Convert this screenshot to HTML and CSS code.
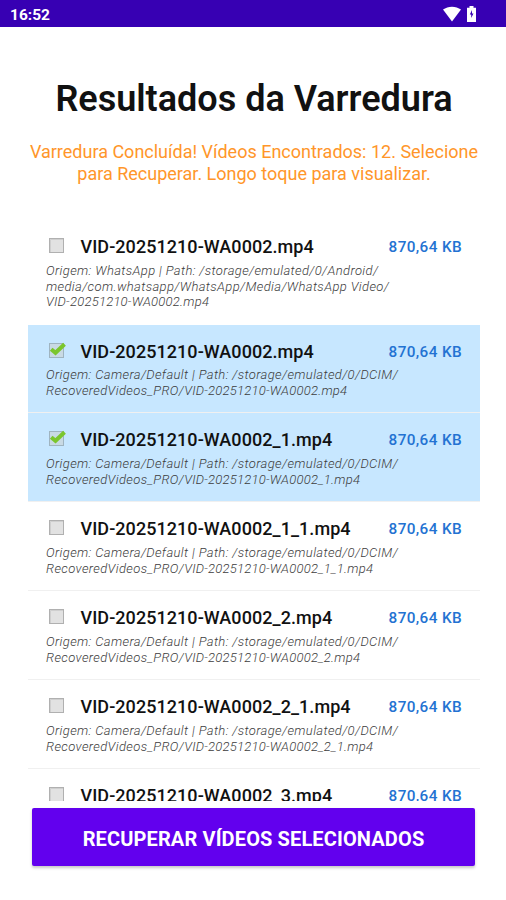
FILE: index.html
```html
<!DOCTYPE html>
<html lang="pt-BR">
<head>
<meta charset="utf-8">
<title>Resultados da Varredura</title>
<link rel="stylesheet" href="styles.css">
</head>
<body>
<svg class="defs" width="0" height="0" aria-hidden="true">
  <symbol id="box" viewBox="0 0 18 18">
    <rect x="1.5" y="1.5" width="14" height="14" fill="#e2e2e2" stroke="#b0b0b0"/>
    <path d="M2.5 15V2.5H15" fill="none" stroke="#cfcfcf"/>
  </symbol>
  <symbol id="checked" viewBox="0 0 18 18">
    <rect x="1.5" y="1.5" width="14" height="14" fill="#c9dae4" stroke="#9fb4c0"/>
    <path d="M3.2 7.2l4.3 3.6 9-8.6" fill="none" stroke="#7bc62d" stroke-width="4"/>
  </symbol>
</svg>
<header class="status">
  <span class="clock">16:52</span>
  <span class="status-icons">
    <svg width="18" height="16" viewBox="0 0 18 16"><path d="M0 3.6C5-.3 13-.3 18 3.6L9 15.5z" fill="#fff"/></svg>
    <svg width="9" height="16" viewBox="0 0 9 16"><path d="M2.5 0h4v1.7H9V16H0V1.7h2.5z" fill="#fff"/><path d="M5 4L2.8 8.5h1.4V12l2.3-4.5H5z" fill="#3700b3"/></svg>
  </span>
</header>
<main class="screen">
  <h1 class="title">Resultados da Varredura</h1>
  <p class="message">Varredura Concluída! Vídeos Encontrados: 12. Selecione<br>para Recuperar. Longo toque para visualizar.</p>
  <ul class="list">
    <li class="item">
      <div class="row"><svg class="check"><use href="#box"/></svg><span class="name">VID-20251210-WA0002.mp4</span><span class="size">870,64 KB</span></div>
      <p class="path">Origem: WhatsApp | Path: /storage/emulated/0/Android/<br>media/com.whatsapp/WhatsApp/Media/WhatsApp Video/<br><span class="file">VID-20251210-WA0002.mp4</span></p>
    </li>
    <li class="item selected">
      <div class="row"><svg class="check"><use href="#checked"/></svg><span class="name">VID-20251210-WA0002.mp4</span><span class="size">870,64 KB</span></div>
      <p class="path">Origem: Camera/Default | Path: /storage/emulated/0/DCIM/<br>RecoveredVideos_PRO/<span class="file">VID-20251210-WA0002.mp4</span></p>
    </li>
    <li class="item selected">
      <div class="row"><svg class="check"><use href="#checked"/></svg><span class="name">VID-20251210-WA0002_1.mp4</span><span class="size">870,64 KB</span></div>
      <p class="path">Origem: Camera/Default | Path: /storage/emulated/0/DCIM/<br>RecoveredVideos_PRO/<span class="file">VID-20251210-WA0002_1.mp4</span></p>
    </li>
    <li class="item">
      <div class="row"><svg class="check"><use href="#box"/></svg><span class="name">VID-20251210-WA0002_1_1.mp4</span><span class="size">870,64 KB</span></div>
      <p class="path">Origem: Camera/Default | Path: /storage/emulated/0/DCIM/<br>RecoveredVideos_PRO/<span class="file">VID-20251210-WA0002_1_1.mp4</span></p>
    </li>
    <li class="item">
      <div class="row"><svg class="check"><use href="#box"/></svg><span class="name">VID-20251210-WA0002_2.mp4</span><span class="size">870,64 KB</span></div>
      <p class="path">Origem: Camera/Default | Path: /storage/emulated/0/DCIM/<br>RecoveredVideos_PRO/<span class="file">VID-20251210-WA0002_2.mp4</span></p>
    </li>
    <li class="item">
      <div class="row"><svg class="check"><use href="#box"/></svg><span class="name">VID-20251210-WA0002_2_1.mp4</span><span class="size">870,64 KB</span></div>
      <p class="path">Origem: Camera/Default | Path: /storage/emulated/0/DCIM/<br>RecoveredVideos_PRO/<span class="file">VID-20251210-WA0002_2_1.mp4</span></p>
    </li>
    <li class="item">
      <div class="row"><svg class="check"><use href="#box"/></svg><span class="name">VID-20251210-WA0002_3.mp4</span><span class="size">870,64 KB</span></div>
    </li>
  </ul>
  <button class="recover">RECUPERAR VÍDEOS SELECIONADOS</button>
</main>
</body>
</html>
```

FILE: styles.css
```css
* { box-sizing: border-box; margin: 0; padding: 0; }
body { width: 506px; height: 900px; overflow: hidden; background: #fff; font-family: Roboto, "Liberation Sans", sans-serif; }
.defs { display: block; }
.status { height: 27px; padding: 0 30px 0 10px; background: #3700b3; display: flex; align-items: center; justify-content: space-between; color: #fff; }
.clock { font-size: 15.5px; font-weight: 700; line-height: 20px; padding-top: 3px; }
.status-icons { display: flex; gap: 6px; }
.screen { height: 873px; padding: 0 26px 0 28px; display: flex; flex-direction: column; }
.title { margin-top: 51px; font-size: 36px; font-weight: 600; line-height: 42px; color: #111; text-align: center; white-space: nowrap; }
.message { margin-top: 21px; font-size: 18px; line-height: 21.5px; color: #ff962a; text-align: center; white-space: nowrap; }
.list { list-style: none; margin-top: 36px; height: 581px; overflow: hidden; flex: none; }
.item { height: 88.9px; padding: 15px 18px 0; border-bottom: 1px solid #f0f0f0; }
.item:first-child { height: 104.5px; border-bottom-color: #fff; }
.item.selected { background: #c7e7ff; }
.row { display: flex; align-items: center; height: 24px; }
.check { width: 18px; height: 18px; margin: -2px 14.5px 0 2px; flex: none; }
.name { font-size: 18px; font-weight: 500; line-height: 24px; letter-spacing: .06px; color: #111; white-space: nowrap; }
.size { margin-left: auto; font-size: 15.3px; font-weight: 500; letter-spacing: .38px; color: #2372d2; white-space: nowrap; }
.path { margin-top: 3.8px; font-size: 13px; font-style: italic; font-weight: 300; line-height: 15.8px; letter-spacing: .38px; color: #3c3c3c; white-space: nowrap; }
.file { letter-spacing: .24px; }
.recover { margin: 7px 5px 0 4px; height: 58px; padding-top: 4px; flex: none; border: 0; border-radius: 2px; background: #6200ee; color: #fff; font: 700 20px/54px Roboto, sans-serif; letter-spacing: .13px; box-shadow: 0 2px 3px rgba(0,0,0,.22); white-space: nowrap; }
```
